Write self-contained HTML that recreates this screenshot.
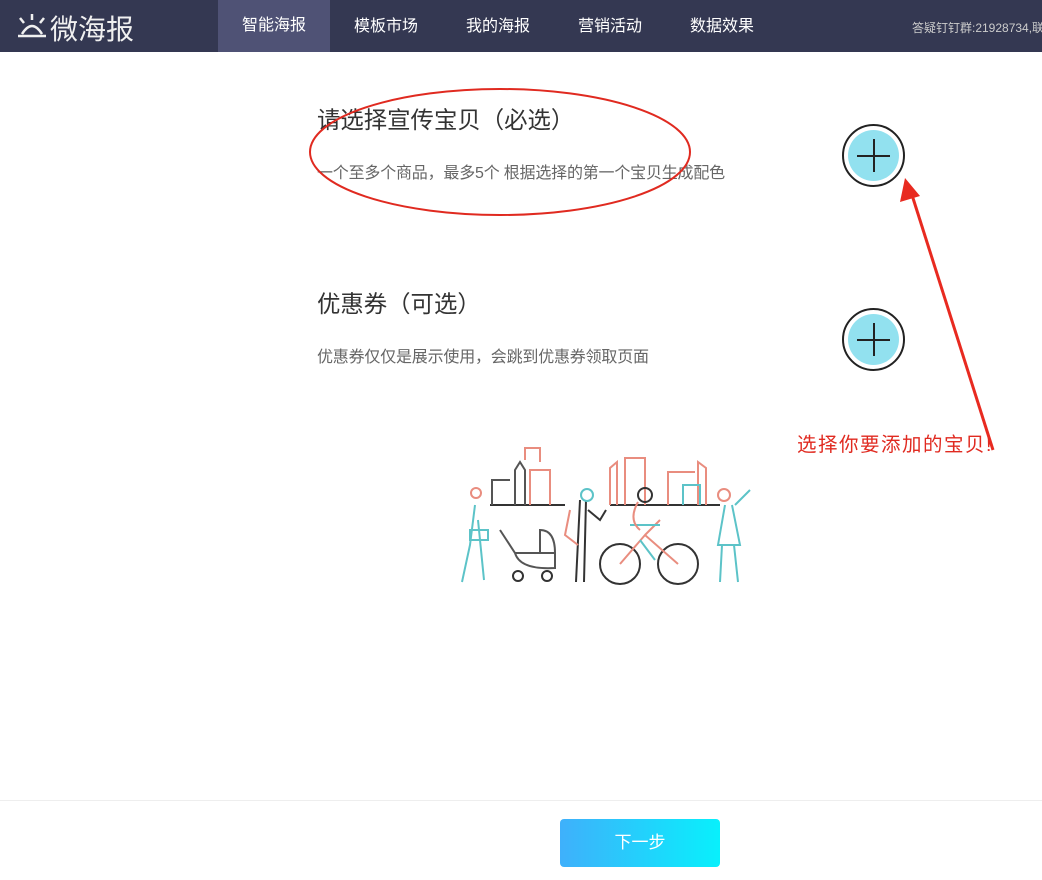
<!DOCTYPE html>
<html><head><meta charset="utf-8"><style>
*{margin:0;padding:0;box-sizing:border-box}
body{width:1042px;height:880px;background:#fff;font-family:"Liberation Sans","Noto Sans CJK SC",sans-serif;position:relative;overflow:hidden}
.nav{position:absolute;left:0;top:0;width:1042px;height:52px;background:#343852;color:#fff}
.logo{position:absolute;left:50px;top:8px;font-size:28px;color:#f0f0f0}
.tab{position:absolute;top:1px;height:52px;line-height:52px;font-size:16px;color:#fff;text-align:center;width:112px}
.act{background:#4f5275;top:0}
.qq{position:absolute;left:912px;top:19px;font-size:12px;color:#ccc;white-space:nowrap}
.t{position:absolute;left:317px;font-size:23.4px;color:#333}
.s{position:absolute;left:317px;font-size:16px;color:#666;letter-spacing:-0.2px}
.c{position:absolute;left:842px;width:63px;height:63px;border-radius:50%;border:2px solid #222;background:#fff}
.c i{position:absolute;left:4px;top:4px;width:51px;height:51px;border-radius:50%;background:#92e1ef}
.c b{position:absolute;background:#222}
.foot{position:absolute;left:0;top:800px;width:1042px;height:1px;background:#eee}
.btn{position:absolute;left:560px;top:819px;width:160px;height:48px;border-radius:4px;background:linear-gradient(90deg,#3fb0fb,#08f0fc);color:#fff;font-size:17px;text-align:center;line-height:48px}
</style></head><body>
<div class="nav">
<svg style="position:absolute;left:16px;top:12px" width="32" height="28" viewBox="0 0 32 28" fill="none" stroke="#f0f0f0" stroke-width="2.5"><line x1="16" y1="2" x2="16" y2="8"/><line x1="4" y1="6" x2="8" y2="11"/><line x1="28" y1="6" x2="24" y2="11"/><path d="M6 22 Q16 6 26 22"/><line x1="2" y1="24" x2="30" y2="24"/></svg>
<div class="logo">微海报</div>
<div class="tab act" style="left:218px">智能海报</div>
<div class="tab" style="left:330px">模板市场</div>
<div class="tab" style="left:442px">我的海报</div>
<div class="tab" style="left:554px">营销活动</div>
<div class="tab" style="left:666px">数据效果</div>
<div class="qq">答疑钉钉群:21928734,联系</div>
</div>
<div class="t" style="top:101px">请选择宣传宝贝（必选）</div>
<div class="s" style="top:159px">一个至多个商品，最多5个 根据选择的第一个宝贝生成配色</div>
<div class="t" style="top:285px">优惠券（可选）</div>
<div class="s" style="top:343px">优惠券仅仅是展示使用，会跳到优惠券领取页面</div>
<div class="c" style="top:124px"><i></i><b style="left:13px;top:29px;width:33px;height:2px"></b><b style="left:29px;top:13px;width:2px;height:33px"></b></div>
<div class="c" style="top:308px"><i></i><b style="left:13px;top:29px;width:33px;height:2px"></b><b style="left:29px;top:13px;width:2px;height:33px"></b></div>
<svg style="position:absolute;left:0;top:0" width="1042" height="880">
<ellipse cx="500" cy="152" rx="190" ry="63" fill="none" stroke="#e02a20" stroke-width="2"/>
<line x1="993" y1="450" x2="912" y2="195" stroke="#e82a20" stroke-width="3"/>
<polygon points="905,178 900,202 920,196" fill="#e82a20"/>
<g fill="none" stroke-width="2">
<line x1="490" y1="505" x2="565" y2="505" stroke="#333"/><line x1="610" y1="505" x2="720" y2="505" stroke="#333"/>
<path d="M492 505V480H510M515 505V470L520 462L525 470V505" stroke="#555"/>
<path d="M530 505V470H550V505M525 460V448H540V462" stroke="#e98d7f"/>
<path d="M610 505V468L617 462V505M625 505V458H645V505" stroke="#e98d7f"/>
<path d="M668 505V472H695M698 505V462L706 468V505" stroke="#e98d7f"/>
<path d="M683 505V485H700V505" stroke="#5cc3c8"/>
<path d="M475 505L470 545L462 582M478 520L484 580M470 530H488V540H470Z" stroke="#5cc3c8"/>
<circle cx="476" cy="493" r="5" stroke="#e98d7f"/>
<path d="M500 530L515 553H555M515 553Q520 570 555 568V553M540 553V530Q555 530 555 553" stroke="#555"/>
<circle cx="518" cy="576" r="5" stroke="#333"/><circle cx="547" cy="576" r="5" stroke="#333"/>
<path d="M580 500L576 582M586 500L584 582M588 510L600 520L606 510" stroke="#333"/>
<path d="M570 510L565 535L578 545" stroke="#e98d7f"/><circle cx="587" cy="495" r="6" stroke="#5cc3c8"/>
<circle cx="620" cy="564" r="20" stroke="#333"/><circle cx="678" cy="564" r="20" stroke="#333"/>
<path d="M620 564L645 535L678 564M645 535L660 520" stroke="#e98d7f"/>
<path d="M630 525H660M640 540L655 560" stroke="#5cc3c8"/><circle cx="645" cy="495" r="7" stroke="#333"/>
<path d="M638 502Q628 520 640 530" stroke="#e98d7f"/>
<path d="M725 505L718 545H740L732 505M722 545L720 582M734 545L738 582M735 505L750 490" stroke="#5cc3c8"/>
<circle cx="724" cy="495" r="6" stroke="#e98d7f"/>
</g>
</svg>
<div style="position:absolute;left:797px;top:428px;font-size:19.5px;letter-spacing:1.5px;color:#e02a20;white-space:nowrap">选择你要添加的宝贝!</div>
<div class="foot"></div>
<div class="btn">下一步</div>
</body></html>
